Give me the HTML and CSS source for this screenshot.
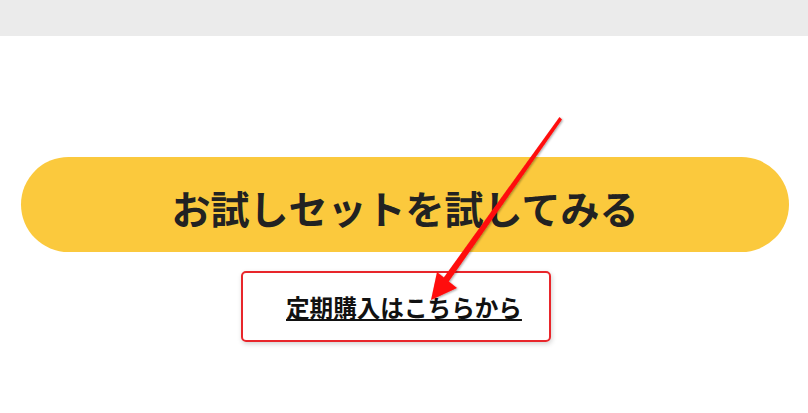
FILE: index.html
```html
<!DOCTYPE html>
<html lang="ja">
<head>
<meta charset="utf-8">
<link rel="stylesheet" href="styles.css">
</head>
<body>
<div class="topbar"></div>
<main class="content">
  <a class="trial-btn" href="#">お試しセットを試してみる</a>
  <div class="sub-wrap">
    <div class="sub-box"><a class="sub-link" href="#">定期購入はこちらから</a></div>
  </div>
  <svg class="arrow" width="808" height="413" viewBox="0 0 808 413">
    <defs>
      <filter id="sh" x="-20%" y="-20%" width="140%" height="140%">
        <feDropShadow dx="1" dy="1" stdDeviation="1.2" flood-color="#000" flood-opacity="0.35"/>
      </filter>
    </defs>
    <g filter="url(#sh)" fill="#ff0a0a">
      <polygon points="559.5,117 562,119.5 447,284 442,280"/>
      <polygon points="431,300 437,272 457,288"/>
    </g>
  </svg>
</main>
</body>
</html>
```
FILE: styles.css
```css
html, body {
  margin: 0;
  padding: 0;
  background: #ffffff;
}
body {
  width: 808px;
  height: 413px;
  overflow: hidden;
  font-family: "Noto Sans CJK JP", "Noto Sans", sans-serif;
}
.topbar {
  height: 36px;
  background: #ebebeb;
}
.content {
  position: relative;
  padding: 121px 19px 0 21px;
}
.trial-btn {
  display: flex;
  align-items: center;
  justify-content: center;
  height: 95px;
  border-radius: 48px;
  background: #fbc93d;
  color: #222222;
  font-size: 39px;
  font-weight: 700;
  text-decoration: none;
  padding-top: 5px;
  box-sizing: border-box;
}
.sub-wrap {
  display: flex;
  padding-left: 220px;
  margin-top: 19px;
}
.sub-box {
  width: 310px;
  height: 71px;
  box-sizing: border-box;
  border: 2px solid #e8262b;
  border-radius: 5px;
  box-shadow: 1px 2px 5px rgba(0,0,0,0.18);
  display: flex;
  align-items: center;
  padding-left: 43px;
  padding-top: 0;
}
.sub-link {
  color: #111111;
  font-size: 23.6px;
  font-weight: 700;
  text-decoration: underline;
  text-underline-offset: 2px;
  text-decoration-thickness: 2px;
}
.arrow {
  position: absolute;
  left: 0;
  top: -36px;
  pointer-events: none;
}
```
